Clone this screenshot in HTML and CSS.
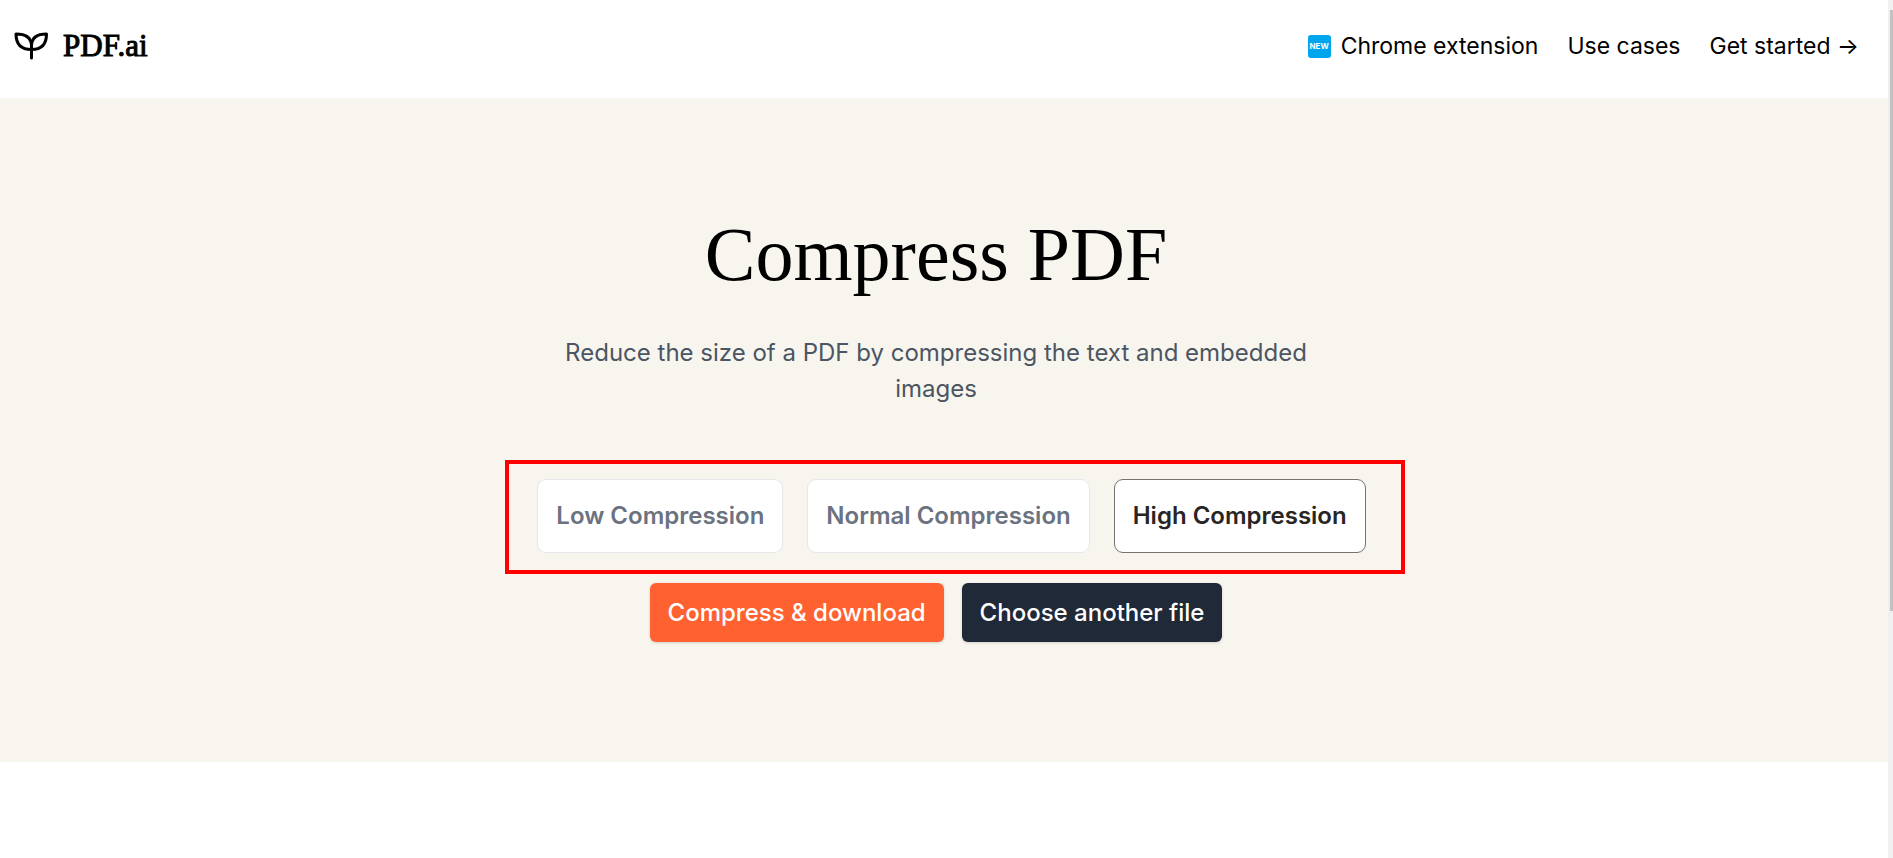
FILE: index.html
```
<!DOCTYPE html>
<html lang="en">
<head>
    <meta charset="UTF-8">
    <meta name="viewport" content="width=device-width, initial-scale=1.0">
    <title>Compress PDF</title>
    <link rel="stylesheet" href="styles.css">
</head>
<body>
    <div class="page">
        <header class="header">
            <a class="logo" href="#">
                <svg class="logo-icon" viewBox="0 0 34 28" fill="none" stroke="#000" stroke-width="3" stroke-linecap="round" stroke-linejoin="round">
                    <path d="M17.500 26V13C17 6 12 2 2 2C2 12 7 17.500 17.500 17.500"/>
                    <path d="M17.500 13C18 6 23 2 32.500 2C32.500 12 28 17.500 17.500 17.500"/>
                </svg>
                <span>PDF.ai</span>
            </a>
            <nav class="nav">
                <a href="#"><span class="new">NEW</span>Chrome extension</a>
                <a href="#">Use cases</a>
                <a href="#">Get started →</a>
            </nav>
        </header>

        <main class="hero">
            <h1>Compress PDF</h1>
            <p class="desc">Reduce the size of a PDF by compressing the text and embedded images</p>
            <div class="levels">
                <button type="button" class="level">Low Compression</button>
                <button type="button" class="level">Normal Compression</button>
                <button type="button" class="level active">High Compression</button>
            </div>
            <div class="actions">
                <button type="button" class="btn btn-orange">Compress &amp; download</button>
                <button type="button" class="btn btn-dark">Choose another file</button>
            </div>
        </main>
    </div>
    <div class="scrollbar"><div class="thumb"></div></div>
</body>
</html>
```
FILE: styles.css
```
* {
    box-sizing: border-box;
}
body {
    margin: 0;
    display: flex;
    min-height: 100vh;
    background-color: white;
    color: black;
    font-family: Inter, "Liberation Sans", sans-serif;
}
.page {
    flex: 1;
}
.header {
    display: flex;
    justify-content: space-between;
    align-items: flex-start;
    height: 98px;
    padding: 28px 29px 0 14px;
}
.header a {
    color: black;
    text-decoration: none;
}
.logo {
    display: flex;
    align-items: center;
    gap: 15px;
    font-family: "Liberation Serif", serif;
    font-size: 31px;
    line-height: 36px;
    -webkit-text-stroke: 1px black;
}
.logo-icon {
    width: 34px;
    height: 28px;
}
.nav {
    display: flex;
    gap: 29px;
    font-size: 23px;
    line-height: 36px;
}
.nav a {
    display: flex;
    align-items: center;
}
.new {
    width: 23px;
    height: 23px;
    margin-right: 10px;
    border-radius: 3px;
    background-color: #00a6ed;
    color: white;
    font-size: 8px;
    font-weight: 700;
    line-height: 23px;
    text-align: center;
}
.hero {
    display: flex;
    flex-direction: column;
    align-items: center;
    padding: 108px 16px 120px 0;
    background-color: #f8f5ee;
}
h1 {
    margin: 0;
    font-family: "Liberation Serif", serif;
    font-size: 76px;
    font-weight: 400;
    line-height: 96px;
}
.desc {
    max-width: 800px;
    margin: 33px 0 0;
    color: #4b5563;
    font-size: 24px;
    font-weight: 400;
    line-height: 36px;
    text-align: center;
}
.levels {
    display: flex;
    gap: 24px;
    margin: 53px 0 9px 38px;
    padding: 15px 35px 17px 28px;
    border: 4px solid #ff0000;
}
button {
    font-family: inherit;
    font-size: 24px;
    cursor: pointer;
}
.level {
    height: 74px;
    padding: 0 18px 2px;
    border: 1px solid #e5e7eb;
    border-radius: 9px;
    background-color: white;
    color: #6b7280;
    font-weight: 600;
}
.active {
    border-color: #78716c;
    color: #292524;
}
.actions {
    display: flex;
    gap: 18px;
}
.btn {
    height: 59px;
    padding: 0 18px;
    border: none;
    border-radius: 6px;
    color: white;
    font-weight: 500;
    box-shadow: 0 1px 3px rgba(0, 0, 0, 0.15);
}
.btn-orange {
    background-color: #ff6230;
}
.btn-dark {
    background-color: #1f2937;
}
.scrollbar {
    width: 5px;
    padding: 10px 0 0 2px;
    background-color: #f0f0f0;
}
.thumb {
    height: 70vh;
    background-color: #c1c1c1;
}
```
